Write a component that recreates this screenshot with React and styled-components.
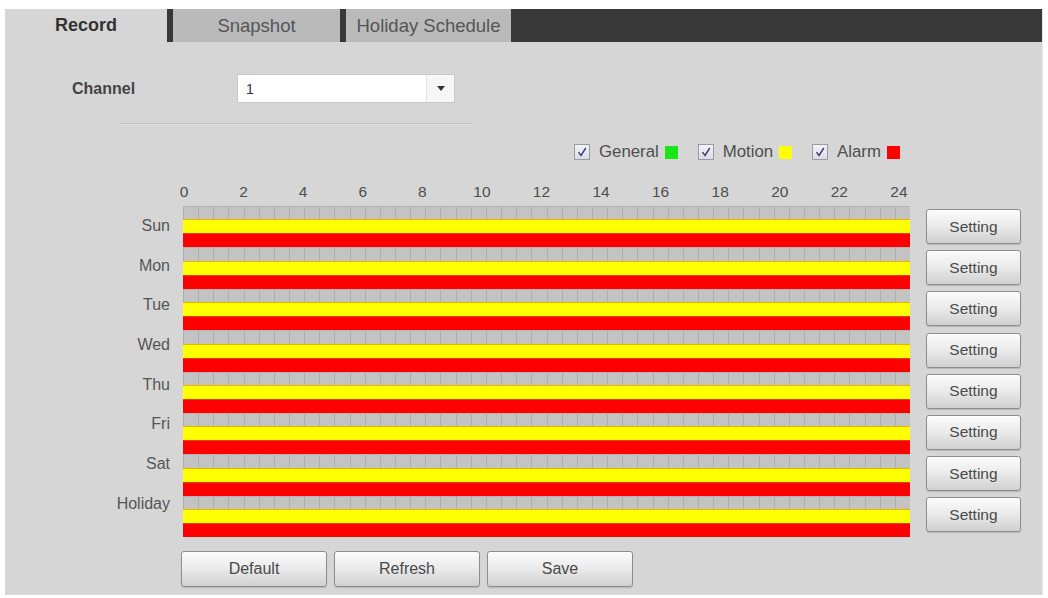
import React from "react";
import styled, { createGlobalStyle } from "styled-components";

const days = ["Sun", "Mon", "Tue", "Wed", "Thu", "Fri", "Sat", "Holiday"];
const hours = [0, 2, 4, 6, 8, 10, 12, 14, 16, 18, 20, 22, 24];
const legend = [
  { name: "General", color: "#19e619" },
  { name: "Motion", color: "#ffff00" },
  { name: "Alarm", color: "#ff0000" },
];

export default function App() {
  return (
    <>
      <GlobalStyle />
      <Panel>
        <TabBar>
          <Tab $active $width={162}>Record</Tab>
          <Tab $width={167}>Snapshot</Tab>
          <Tab $width={165}>Holiday Schedule</Tab>
        </TabBar>

        <ChannelRow>
          <FieldLabel>Channel</FieldLabel>
          <Select>
            <SelectValue>1</SelectValue>
            <SelectArrow>
              <Caret />
            </SelectArrow>
          </Select>
        </ChannelRow>
        <Separator />

        <Legend>
          {legend.map((item) => (
            <LegendItem key={item.name}>
              <CheckBox>
                <svg width="12" height="12" viewBox="0 0 12 12">
                  <path d="M2.5 6.2 L5 9.5 L9.8 2" fill="none" stroke="#3b3b78" strokeWidth="1.4" />
                </svg>
              </CheckBox>
              <LegendText>{item.name}</LegendText>
              <Swatch $color={item.color} />
            </LegendItem>
          ))}
        </Legend>

        <HourScale>
          {hours.map((h) => (
            <Hour key={h}>{h}</Hour>
          ))}
        </HourScale>

        <Schedule>
          <DayLabels>
            {days.map((d) => (
              <DayLabel key={d}>{d}</DayLabel>
            ))}
          </DayLabels>
          <Bars>
            {days.map((d) => (
              <DayBars key={d}>
                <GridStrip />
                <Strip $color="#ffff00" $edge="#eab400" />
                <Strip $color="#ff0000" $edge="#e04000" />
              </DayBars>
            ))}
          </Bars>
          <SettingColumn>
            {days.map((d) => (
              <Button key={d} $width={95} $height={35}>Setting</Button>
            ))}
          </SettingColumn>
        </Schedule>

        <Actions>
          <Button $width={146} $height={36} $size={16}>Default</Button>
          <Button $width={146} $height={36} $size={16}>Refresh</Button>
          <Button $width={146} $height={36} $size={16}>Save</Button>
        </Actions>
      </Panel>
    </>
  );
}

const GlobalStyle = createGlobalStyle`
  body {
    margin: 0;
    background: #ffffff;
    font-family: "Liberation Sans", Arial, sans-serif;
    color: #4a4a4a;
  }
`;

const Panel = styled.div`
  margin: 9px 0 0 5px;
  width: 1038px;
  height: 586px;
  background: #d6d6d6;
  border-right: 1px solid #e6e6e6;
  box-sizing: border-box;
`;

const TabBar = styled.div`
  display: flex;
  gap: 6px;
  height: 33px;
  background: #383838;
`;

const Tab = styled.div`
  width: ${(p) => p.$width}px;
  display: flex;
  align-items: center;
  justify-content: center;
  font-size: ${(p) => (p.$active ? 18 : 18.5)}px;
  font-weight: ${(p) => (p.$active ? "bold" : "normal")};
  color: ${(p) => (p.$active ? "#333" : "#555")};
  background: ${(p) => (p.$active ? "#d6d6d6" : "#bababa")};
`;

const ChannelRow = styled.div`
  display: flex;
  align-items: center;
  margin-top: 32px;
  padding-left: 67px;
`;

const FieldLabel = styled.div`
  width: 165px;
  font-size: 16px;
  font-weight: bold;
  color: #444;
`;

const Select = styled.div`
  width: 218px;
  height: 29px;
  display: flex;
  background: #fff;
  border: 1px solid #c9c9c9;
  box-sizing: border-box;
`;

const SelectValue = styled.div`
  flex: 1;
  display: flex;
  align-items: center;
  padding-left: 8px;
  font-size: 14px;
  color: #333;
`;

const SelectArrow = styled.div`
  width: 27px;
  display: flex;
  align-items: center;
  justify-content: center;
  border-left: 1px solid #e2e2e2;
  background: #f6f6f6;
`;

const Caret = styled.span`
  width: 0;
  height: 0;
  border-left: 4px solid transparent;
  border-right: 4px solid transparent;
  border-top: 5px solid #333;
`;

const Separator = styled.div`
  margin: 20px 0 0 115px;
  width: 352px;
  height: 1px;
  background: #c3c3c3;
  box-shadow: 0 1px 0 #e0e0e0;
`;

const Legend = styled.div`
  display: flex;
  align-items: center;
  gap: 20px;
  margin-top: 18px;
  padding-left: 569px;
`;

const LegendItem = styled.div`
  display: flex;
  align-items: center;
`;

const CheckBox = styled.span`
  width: 16px;
  height: 16px;
  box-sizing: border-box;
  display: flex;
  align-items: center;
  justify-content: center;
  border: 1px solid #9a9aa6;
  background: linear-gradient(#f2f2f6, #dcdce4);
  margin-right: 9px;
`;

const LegendText = styled.span`
  font-size: 16.8px;
  color: #4e4e4e;
  margin-right: 6px;
`;

const Swatch = styled.span`
  width: 13px;
  height: 13px;
  background: ${(p) => p.$color};
`;

const HourScale = styled.div`
  display: flex;
  justify-content: space-between;
  width: 735px;
  margin: 21px 0 0 169px;
`;

const Hour = styled.span`
  width: 20px;
  text-align: center;
  font-size: 15.5px;
  line-height: 18px;
  color: #4e4e4e;
`;

const Schedule = styled.div`
  display: flex;
  align-items: flex-start;
  margin-top: 5px;
`;

const DayLabels = styled.div`
  width: 165px;
  display: flex;
  flex-direction: column;
`;

const DayLabel = styled.div`
  height: 39.7px;
  line-height: 39.7px;
  text-align: right;
  font-size: 16px;
  color: #555;
`;

const Bars = styled.div`
  width: 727px;
  margin-left: 13px;
  display: flex;
  flex-direction: column;
`;

const DayBars = styled.div`
  display: flex;
  flex-direction: column;
`;

const GridStrip = styled.div`
  height: 13.4px;
  background:
    repeating-linear-gradient(to right, #adadad 0 1px, transparent 1px 15.146px),
    #c3c3c3;
  box-shadow: inset 0 1px 0 #b4b4b4;
`;

const Strip = styled.div`
  height: 14px;
  background: ${(p) => p.$color};
  box-shadow: inset 0 1px 0 ${(p) => p.$edge};
`;

const SettingColumn = styled.div`
  display: flex;
  flex-direction: column;
  gap: 6.2px;
  margin-left: 16px;
  padding-top: 3px;
`;

const Button = styled.button`
  width: ${(p) => p.$width}px;
  height: ${(p) => p.$height}px;
  padding: 0;
  font-family: "Liberation Sans", Arial, sans-serif;
  font-size: ${(p) => p.$size || 15.5}px;
  color: #4a4a4a;
  background: linear-gradient(#fbfbfb 0%, #ececec 45%, #d0d0d0 100%);
  border: 1px solid #8d8d8d;
  border-radius: 3px;
  box-shadow: inset 0 1px 0 #ffffff, 0 1px 1px rgba(0, 0, 0, 0.15);

  &:hover {
    cursor: pointer;
  }
`;

const Actions = styled.div`
  display: flex;
  gap: 7px;
  margin-top: 14px;
  padding-left: 176px;
`;
